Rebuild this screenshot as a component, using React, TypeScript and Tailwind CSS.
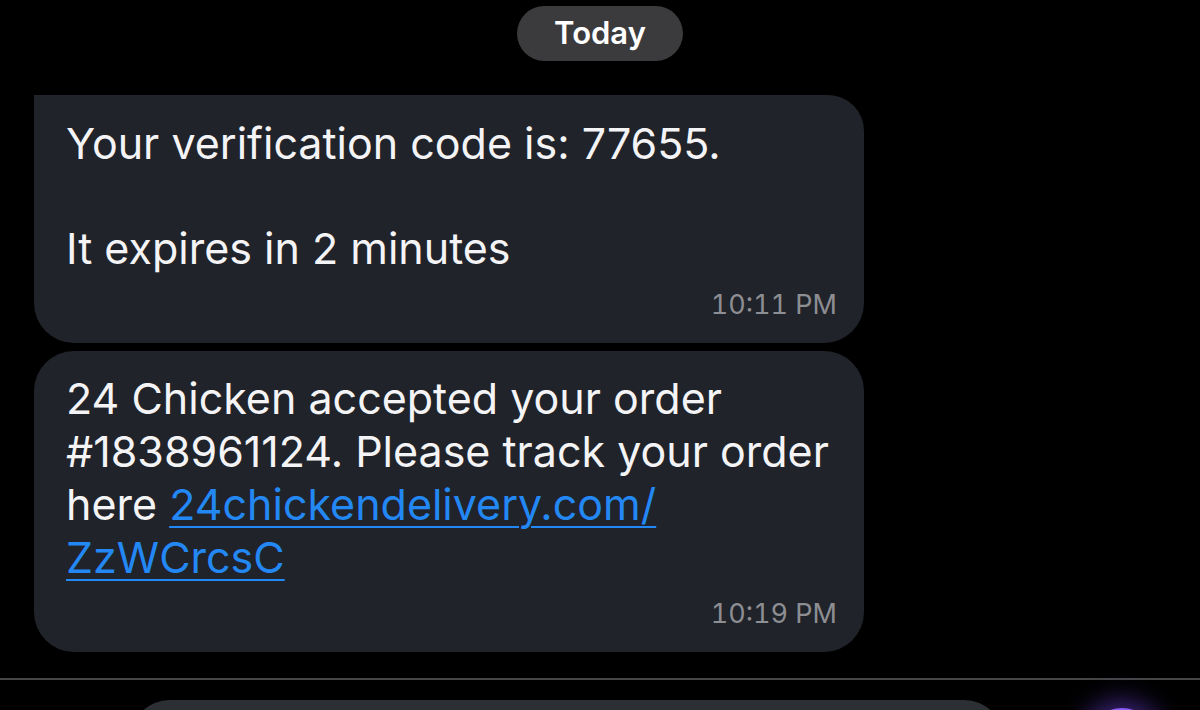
export default function App() {
  return (
    <div className="relative flex h-[710px] w-full flex-col overflow-hidden bg-black font-['Inter','Noto_Sans',sans-serif] antialiased">
      {/* Date pill */}
      <div className="mt-[6px] flex justify-center">
        <div className="flex h-[55px] w-[166px] items-center justify-center rounded-full bg-[#3b3b3d] text-[31px] font-semibold text-white">
          Today
        </div>
      </div>

      {/* Messages */}
      <div className="mt-[34px] flex flex-col gap-[8px] pl-[34px]">
        <div className="w-[830px] rounded-b-[40px] rounded-tr-[36px] bg-[#202329] pb-[22px] pl-[32px] pr-[27px] pt-[22px]">
          <p className="text-[43px] leading-[52.5px] text-[#f4f4f6]">
            Your verification code is: 77655.
            <br />
            <br />
            It expires in 2 minutes
          </p>
          <div className="mt-[14px] text-right text-[27px] leading-[32px] tabular-nums text-[#8d8e93]">
            10:11 PM
          </div>
        </div>

        <div className="w-[830px] rounded-[40px] bg-[#202329] pb-[22px] pl-[32px] pr-[27px] pt-[21px]">
          <p className="text-[43px] leading-[53px] text-[#f4f4f6]">
            24 Chicken accepted your order
            <br />
            #1838961124. Please track your order
            <br />
            here{' '}
            <a className="text-[#2388f4] underline decoration-2 underline-offset-[6px]">
              24chickendelivery.com/
              <br />
              ZzWCrcsC
            </a>
          </p>
          <div className="mt-[14px] text-right text-[27px] leading-[32px] tabular-nums text-[#8d8e93]">
            10:19 PM
          </div>
        </div>
      </div>

      {/* Divider */}
      <div className="mt-[26px] h-[2px] w-full shrink-0 bg-[#464648]" />

      {/* Compose bar (cut off) */}
      <div className="relative mt-[20px] flex items-start">
        <div className="ml-[130px] h-[40px] w-[874px] rounded-t-[40px] bg-[#2c2f34]" />
        <div className="absolute left-[1086px] top-[8px] h-[72px] w-[72px] rounded-full bg-[#8a5cf6] shadow-[0_0_24px_8px_rgba(124,77,255,0.45)]" />
      </div>
    </div>
  );
}
